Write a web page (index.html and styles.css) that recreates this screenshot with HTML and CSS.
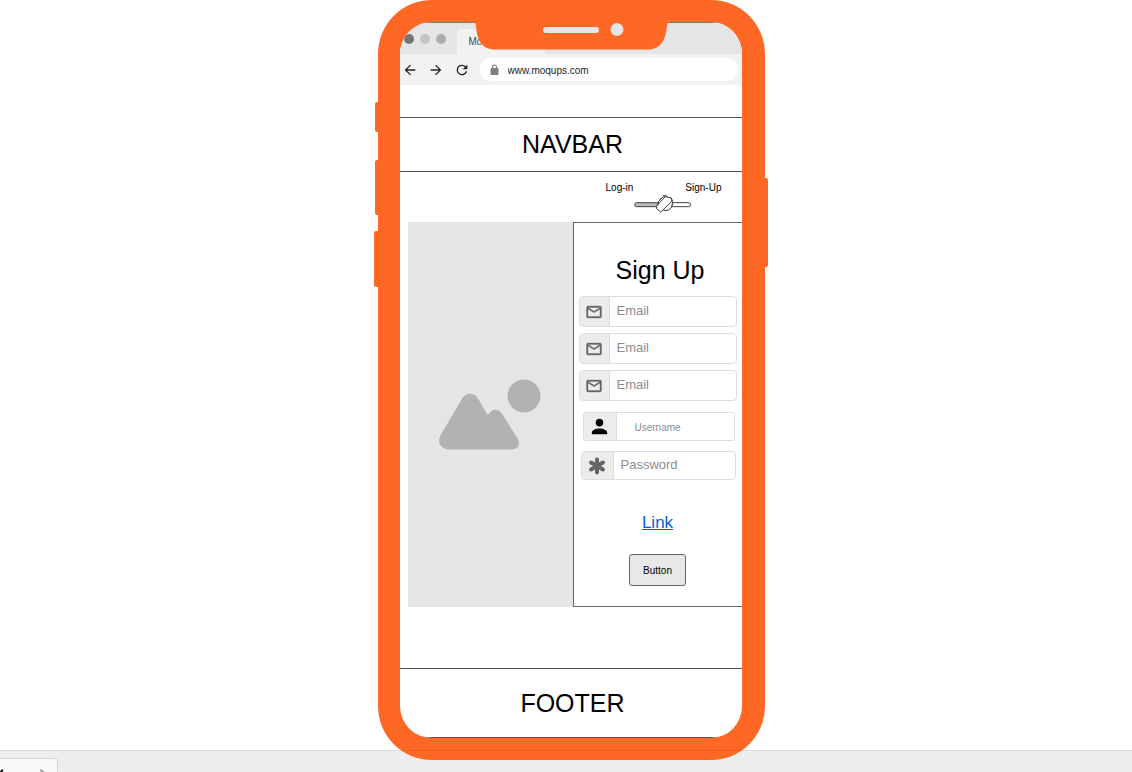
FILE: index.html
```html
<!DOCTYPE html>
<html lang="en">
<head>
<meta charset="utf-8">
<meta name="viewport" content="width=device-width, initial-scale=1">
<title>Sign Up</title>
<link rel="stylesheet" href="styles.css">
</head>
<body>
<div class="phone">
  <span class="side side-mute"></span>
  <span class="side side-up"></span>
  <span class="side side-down"></span>
  <span class="side side-power"></span>

  <div class="screen">
    <div class="tab-strip">
      <span class="dot dot-dark"></span>
      <span class="dot dot-light"></span>
      <span class="dot"></span>
      <div class="tab">Mo</div>
    </div>
    <div class="toolbar">
      <button class="tool" type="button" aria-label="Back"><svg viewBox="0 0 24 24"><path d="M20 11H7.830l5.590-5.590L12 4l-8 8 8 8 1.410-1.410L7.830 13H20z"/></svg></button>
      <button class="tool" type="button" aria-label="Forward"><svg viewBox="0 0 24 24"><path d="M12 4l-1.410 1.410L16.170 11H4v2h12.170l-5.580 5.590L12 20l8-8z"/></svg></button>
      <button class="tool" type="button" aria-label="Reload"><svg viewBox="0 0 24 24"><path d="M17.650 6.350A7.960 7.960 0 0 0 12 4a8 8 0 1 0 7.730 10h-2.080A6 6 0 1 1 12 6c1.660 0 3.140.69 4.220 1.780L13 11h7V4z"/></svg></button>
      <label class="address">
        <svg class="lock" viewBox="0 0 24 24"><path d="M18 8h-1V6A5 5 0 0 0 7 6v2H6a2 2 0 0 0-2 2v10a2 2 0 0 0 2 2h12a2 2 0 0 0 2-2V10a2 2 0 0 0-2-2zM9 6a3 3 0 0 1 6 0v2H9z"/></svg>
        <input type="text" aria-label="Address" value="www.moqups.com">
      </label>
    </div>

    <header class="navbar">NAVBAR</header>

    <div class="mode">
      <div class="mode-labels"><span>Log-in</span><span>Sign-Up</span></div>
      <button class="switch" type="button" role="switch" aria-checked="true" aria-label="Log-in or Sign-Up">
        <svg viewBox="0 0 180 60">
          <rect x="2" y="26" width="82" height="12" rx="6" fill="#bbb"/>
          <rect x="84" y="26" width="86" height="12" rx="6" fill="#fff"/>
          <path d="M88 9L112 12L116 29L112 40L102 48H88L74 44L70 32L78 16z" fill="#fff"/>
          <path d="M68 36L94 8L112 12L114 22L80 54L68 44zM92 8L88 5L101 6M84 12L74 22L72 32M112 13L116 26L112 40L104 48L90 50" fill="#fff"/>
        </svg>
      </button>
    </div>

    <main class="content">
      <div class="picture">
        <svg viewBox="0 0 102 71" role="img" aria-label="Image placeholder">
          <path d="M1.700 56L21.700 22C26 12.500 35.500 12.500 40 21L48.500 36L51.700 32.700C54.500 30 59.500 30 62.700 34.300L78.300 59.300C82 66 79 70.500 72 70.500H12C2 70.500-2.500 64 1.700 56z"/>
          <circle cx="85" cy="17" r="16.500"/>
        </svg>
      </div>
      <form class="signup">
        <h1>Sign Up</h1>
        <div class="emails">
          <label class="field"><span class="addon"><svg class="mail" viewBox="0 0 24 24"><path d="M22 6c0-1.100-.9-2-2-2H4c-1.100 0-2 .9-2 2v12c0 1.100.9 2 2 2h16c1.100 0 2-.9 2-2zm-2 0l-8 5-8-5zm0 12H4V8l8 5 8-5z"/></svg></span><input type="email" placeholder="Email" aria-label="Email"></label>
          <label class="field"><span class="addon"><svg class="mail" viewBox="0 0 24 24"><path d="M22 6c0-1.100-.9-2-2-2H4c-1.100 0-2 .9-2 2v12c0 1.100.9 2 2 2h16c1.100 0 2-.9 2-2zm-2 0l-8 5-8-5zm0 12H4V8l8 5 8-5z"/></svg></span><input type="email" placeholder="Email" aria-label="Confirm email"></label>
          <label class="field"><span class="addon"><svg class="mail" viewBox="0 0 24 24"><path d="M22 6c0-1.100-.9-2-2-2H4c-1.100 0-2 .9-2 2v12c0 1.100.9 2 2 2h16c1.100 0 2-.9 2-2zm-2 0l-8 5-8-5zm0 12H4V8l8 5 8-5z"/></svg></span><input type="email" placeholder="Email" aria-label="Backup email"></label>
        </div>
        <label class="field username"><span class="addon"><svg class="person" viewBox="0 0 24 24"><path d="M12 12c2.210 0 4-1.790 4-4s-1.790-4-4-4-4 1.790-4 4 1.790 4 4 4zm0 2c-2.670 0-8 1.340-8 4v2h16v-2c0-2.660-5.330-4-8-4z"/></svg></span><input type="text" placeholder="Username" aria-label="Username"></label>
        <label class="field password"><span class="addon"><svg class="asterisk" viewBox="0 0 18 18"><path d="M9 2.500v13M3 5.500l12 7M15 5.500L3 12.500"/></svg></span><input type="password" placeholder="Password" aria-label="Password"></label>
        <a class="link" href="#">Link</a>
        <button class="submit" type="button">Button</button>
      </form>
    </main>

    <footer class="footer">FOOTER</footer>
  </div>

  <svg class="notch" viewBox="0 0 203 50">
    <path d="M0 20V22H2Q6 22 6 26Q7 49 24 49.500H179Q195 49 197 26Q197 22 201 22H203V20z" fill="#ff6725"/>
    <rect x="73" y="27" width="56" height="6" rx="3" fill="#e5e5e5"/>
    <circle cx="147" cy="29.500" r="6.500" fill="#e5e5e5"/>
  </svg>
</div>

<div class="shelf">
  <div class="shelf-item">
    <svg viewBox="0 0 58 14">
      <path d="M0 14L3 11" stroke="#111" stroke-width="2"/>
      <path d="M41 11L45 14" stroke="#999" stroke-width="2"/>
    </svg>
  </div>
</div>
</body>
</html>
```

FILE: styles.css
```css
* {
  box-sizing: border-box;
}

body {
  margin: 0;
  min-height: 100vh;
  display: flex;
  flex-direction: column;
  background: #fff;
  color: #000;
  font-family: "Liberation Sans", Arial, sans-serif;
  font-size: 10px;
}

button,
input {
  font: inherit;
  color: inherit;
  border: 0;
  padding: 0;
  background: none;
}

svg {
  display: block;
}

/* Phone frame */
.phone {
  position: relative;
  z-index: 1;
  width: 100%;
  max-width: 387px;
  margin: 0 auto;
  left: 5px;
}

.screen {
  overflow: hidden;
  border: 22px solid #ff6725;
  border-right-width: 23px;
  border-radius: 54px;
  background: #fff;
}

.notch {
  position: absolute;
  top: 0;
  left: 0;
  right: 0;
  width: 203px;
  margin: 0 auto;
}

.side {
  position: absolute;
  width: 8px;
  border-radius: 2px;
  background: #ff6725;
}

.side-mute {
  top: 102px;
  left: -3px;
  height: 30px;
}

.side-up {
  top: 160px;
  left: -3px;
  height: 55px;
}

.side-down {
  top: 231px;
  left: -4px;
  height: 56px;
}

.side-power {
  top: 178px;
  right: -3px;
  height: 89px;
}

/* Browser chrome */
.tab-strip {
  display: flex;
  align-items: center;
  gap: 6px;
  height: 32px;
  padding-left: 4px;
  border-top: 1px solid #777;
  background: #e5e5e5;
}

.dot {
  width: 10px;
  height: 10px;
  border-radius: 50%;
  background: #adadad;
}

.dot-dark {
  background: #757575;
}

.dot-light {
  background: #c4c4c4;
}

.tab {
  align-self: flex-end;
  width: 88px;
  height: 25px;
  margin-left: 5px;
  padding-left: 12px;
  border-radius: 3px 3px 0 0;
  background: #f2f2f2;
  color: #444;
  line-height: 25px;
}

.toolbar {
  display: flex;
  align-items: center;
  gap: 10px;
  padding: 4px 4px 4px 2px;
  background: #f2f2f2;
}

.tool svg {
  width: 16px;
  height: 16px;
  fill: #222;
}

.address {
  flex: 1;
  display: flex;
  align-items: center;
  gap: 7px;
  height: 23px;
  padding-left: 8px;
  border-radius: 12px;
  background: #fff;
}

.lock {
  width: 13px;
  height: 12px;
  fill: #808080;
}

.address input {
  flex: 1;
  min-width: 0;
  padding-top: 2px;
  color: #222;
}

/* Page */
.navbar,
.footer {
  border: 1px solid #555;
  border-width: 1px 0;
  padding-left: 4px;
  font-size: 25px;
  text-align: center;
}

.navbar {
  margin-top: 32px;
  line-height: 53px;
}

.footer {
  margin-top: 61px;
  line-height: 68px;
}

.mode {
  display: flex;
  flex-direction: column;
  align-items: center;
  width: fit-content;
  height: 50px;
  margin-left: auto;
  padding: 10px 20px 0 0;
}

.mode-labels {
  display: flex;
  gap: 52px;
  line-height: 12px;
}

.switch svg {
  width: 60px;
  height: 20px;
  stroke: #444;
  stroke-width: 3;
  stroke-linejoin: round;
}

.content {
  display: grid;
  grid-template-columns: minmax(0, 165fr) minmax(0, 169fr);
  padding-left: 8px;
}

.picture {
  display: grid;
  place-items: center;
  background: #e5e5e5;
}

.picture svg {
  width: 102px;
  fill: #b2b2b2;
}

.signup {
  display: flex;
  flex-direction: column;
  padding: 32px 0 20px;
  border: 1px solid #666;
  border-right: 0;
}

.signup h1 {
  margin: 0 0 11px;
  padding-left: 5px;
  font-size: 25px;
  font-weight: 400;
  line-height: 30px;
  text-align: center;
}

.emails {
  display: grid;
  gap: 6px;
  margin: 0 5px;
}

.field {
  display: flex;
  height: 31px;
  border: 1px solid #ddd;
  border-radius: 4px;
  overflow: hidden;
  background: #fff;
  font-size: 13px;
}

.addon {
  display: grid;
  place-items: center;
  width: 30px;
  border-right: 1px solid #ddd;
  background: #ececec;
}

.field input {
  flex: 1;
  min-width: 0;
  padding: 0 0 2px 7px;
}

.field input::placeholder {
  color: #8c8c8c;
}

.mail {
  width: 18px;
  height: 18px;
  fill: #666;
  stroke: #666;
  stroke-width: 0.5;
}

.field.username {
  height: 29px;
  margin: 11px 7px 10px 9px;
  border-radius: 3px;
  font-size: 10px;
}

.username .addon {
  width: 33px;
}

.field.username input {
  padding: 2px 0 0 18px;
}

.person {
  width: 25px;
  height: 23px;
  fill: #000;
}

.field.password {
  height: 29px;
  margin: 0 6px 0 7px;
}

.password .addon {
  width: 32px;
}

.asterisk {
  width: 18px;
  height: 18px;
  fill: none;
  stroke: #666;
  stroke-width: 4;
  stroke-linecap: round;
}

.link {
  align-self: center;
  margin-top: 33px;
  color: #0060df;
  font-size: 17px;
  line-height: 20px;
}

.submit {
  align-self: center;
  width: 57px;
  height: 32px;
  margin-top: 21px;
  border: 1px solid #666;
  border-radius: 3px;
  background: #e8e8e8;
}

/* Download shelf under the phone */
.shelf {
  position: relative;
  flex: 1;
  min-height: 22px;
  margin-top: -10px;
  padding-top: 8px;
  background: #ededed;
}

.shelf::before {
  content: "";
  position: absolute;
  z-index: 2;
  top: 0;
  left: 0;
  right: 0;
  height: 1px;
  background: rgba(0, 0, 0, 0.08);
}

.shelf-item {
  width: 58px;
  height: 14px;
  overflow: hidden;
  border: 1px solid #d8d8d8;
  border-width: 1px 1px 0 0;
  border-radius: 0 4px 0 0;
  background: #f9f9f9;
}
```
